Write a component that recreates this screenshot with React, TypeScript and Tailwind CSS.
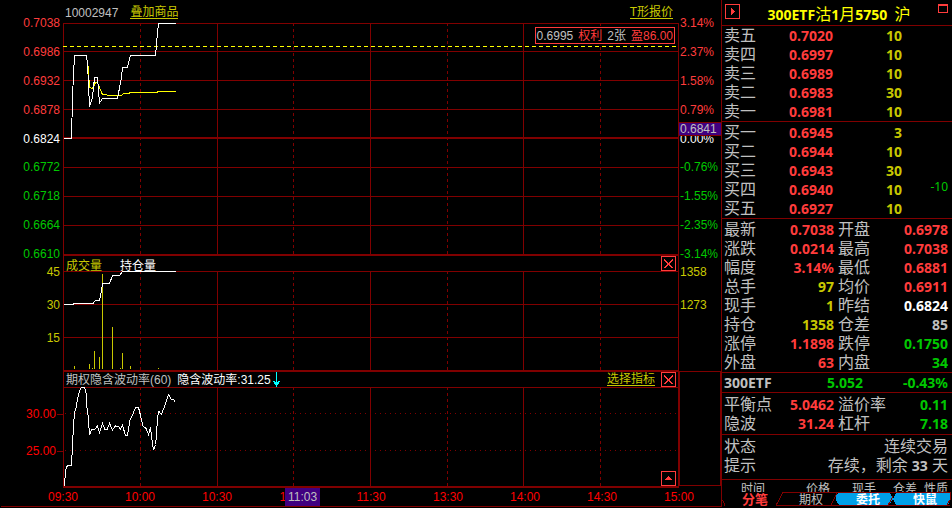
import React from "react";

const SANS = "font-['Liberation_Sans','Noto_Sans_CJK_SC',sans-serif]";
const QUOTE = "font-['Noto_Sans','Noto_Sans_CJK_SC',sans-serif]";

const RED = "text-[#ff3c3c]";
const GREEN = "text-[#00c800]";
const GOLD = "text-[#c8c800]";
const GREY = "text-[#c0c0c0]";
const LINE = "#800000";

const priceScale = [
  ["0.7038", RED, "3.14%"],
  ["0.6986", RED, "2.37%"],
  ["0.6932", RED, "1.58%"],
  ["0.6878", RED, "0.79%"],
  ["0.6824", "text-white", "0.00%"],
  ["0.6772", GREEN, "-0.76%"],
  ["0.6718", GREEN, "-1.55%"],
  ["0.6664", GREEN, "-2.35%"],
  ["0.6610", GREEN, "-3.14%"],
];

const times = ["09:30", "10:00", "10:30", "11:00", "11:30", "13:30", "14:00", "14:30", "15:00"];

const asks = [
  ["卖五", "0.7020", "10", ""],
  ["卖四", "0.6997", "10", ""],
  ["卖三", "0.6989", "10", ""],
  ["卖二", "0.6983", "30", ""],
  ["卖一", "0.6981", "10", ""],
];
const bids = [
  ["买一", "0.6945", "3", ""],
  ["买二", "0.6944", "10", ""],
  ["买三", "0.6943", "30", ""],
  ["买四", "0.6940", "10", "-10"],
  ["买五", "0.6927", "10", ""],
];

type Pair = [string, string, string, string, string, string];
const stats: Pair[] = [
  ["最新", "0.7038", RED, "开盘", "0.6978", RED],
  ["涨跌", "0.0214", RED, "最高", "0.7038", RED],
  ["幅度", "3.14%", RED, "最低", "0.6881", RED],
  ["总手", "97", GOLD, "均价", "0.6911", RED],
  ["现手", "1", GOLD, "昨结", "0.6824", "text-white"],
  ["持仓", "1358", GOLD, "仓差", "85", GREY],
  ["涨停", "1.1898", RED, "跌停", "0.1750", GREEN],
  ["外盘", "63", RED, "内盘", "34", GREEN],
];
const greeks: Pair[] = [
  ["平衡点", "5.0462", RED, "溢价率", "0.11", GREEN],
  ["隐波", "31.24", RED, "杠杆", "7.18", GREEN],
];

/* Half-hour grid lines: whole hours of the session are solid, the rest dashed. */
function TimeGrid({ top, bottom }: { top: number; bottom: number }) {
  return (
    <g stroke={LINE}>
      {[63.5, 217.5, 370.5, 523.5, 678.5].map((x) => (
        <line key={x} x1={x} x2={x} y1={top} y2={bottom} />
      ))}
      {[140.5, 293.5, 447.5, 600.5].map((x) => (
        <line key={x} x1={x} x2={x} y1={top} y2={bottom} strokeDasharray="3 3" />
      ))}
    </g>
  );
}

function Levels({ ys }: { ys: number[] }) {
  return (
    <g stroke={LINE}>
      {ys.map((y) => (
        <line key={y} x1="63" x2="679" y1={y} y2={y} />
      ))}
    </g>
  );
}

function PriceChart() {
  return (
    <svg className="block h-[233px] w-full" viewBox="63 23 616 233" preserveAspectRatio="none" shapeRendering="crispEdges" fill="none" role="img" aria-label="分时走势">
      <TimeGrid top={23} bottom={256} />
      <Levels ys={[23.5, 51.5, 80.5, 109.5, 167.5, 196.5, 225.5]} />
      <path d="M63 138H679M63 255H679" stroke={LINE} strokeWidth="2" />
      <path d="M63 46.5H679" stroke="#ffff00" strokeDasharray="4 3" />
      <path d="M87.5 60 88.5 72 89.5 87.5 92.5 88.5 95.5 82.5H97.5L100.5 90 102.5 94.5 111.5 95.5 115.5 95.5H121.5L123.5 93.5H128.5L130.5 92.5H157.5V91.5H176" stroke="#ffff00" />
      <path d="M64 138.5H71.5L72.5 97 73.5 75 74.5 55.5H86.5L87.5 64 88.5 84 89.5 107 92.5 97 93.5 88 94.5 77.5H97.5L98.5 91 99.5 103 102.5 98.5H117.5L119.5 88 121.5 77 122.5 67.5H127.5L130.5 55.5H155.5L157.5 33 158.5 23.5H176" stroke="#ffffff" />
    </svg>
  );
}

const volumeBars = [
  [74, 366], [89, 364], [92, 368], [94, 351], [99, 357], [102, 274],
  [112, 327], [120, 368], [122, 353], [130, 366], [158, 368],
];

function VolumeChart() {
  return (
    <svg className="block h-[101px] w-full" viewBox="63 271 616 101" preserveAspectRatio="none" shapeRendering="crispEdges" fill="none" role="img" aria-label="成交量">
      <TimeGrid top={271} bottom={372} />
      <Levels ys={[271.5, 304.5, 337.5]} />
      <path d="M63 371H679" stroke={LINE} strokeWidth="2" />
      {volumeBars.map(([x, y]) => (
        <rect key={x} x={x} y={y} width="1" height={369 - y} fill="#c8c800" />
      ))}
      <path d="M64 304.5H73L73.5 303.5H93L95.5 300.5H99.5L101.5 291 102.5 283.5H109.5L112.5 275.5H119.5L122.5 271.5H176" stroke="#ffffff" />
    </svg>
  );
}

function VolatilityChart() {
  return (
    <svg className="block h-[101px] w-full" viewBox="63 387 616 101" preserveAspectRatio="none" shapeRendering="crispEdges" fill="none" role="img" aria-label="期权隐含波动率">
      <TimeGrid top={387} bottom={488} />
      <Levels ys={[387.5]} />
      <path d="M65 413.5H679M65 450.5H679" stroke={LINE} strokeDasharray="1 4" />
      <path d="M63 487H679" stroke={LINE} strokeWidth="2" />
      <path
        d="M64.5 486 65.5 470 67.5 465.5H71.5L72.5 445 73.5 425 74.5 413 76 408 78 397 79.5 391 81.5 387.5H84.5L86 393 87 408 88 415 89 428 89.5 435 91.5 430 95 429 97.5 426 99.5 432.5 102.5 423.5 105 429.5H107L109.5 423.5 112.5 430 115.5 426 119 427 120.5 429 122.5 425.5 125.5 435.5H127.5L130 420 132.5 415 135.5 407.5H138.5L140 413.5 143 426 146 428.5 148.5 434.5 150.5 427.5 152 440 153.5 450 155.5 444.5 156.5 435 157.5 417 159 411.5 161.5 414.5 165 405 168.5 394.5 171.5 399.5H173.5L175.5 402.5"
        stroke="#ffffff"
      />
    </svg>
  );
}

function AxisLabel({ children, className }: { children: React.ReactNode; className: string }) {
  return <div className={"flex h-0 items-center whitespace-nowrap " + className}>{children}</div>;
}

function CloseButton() {
  return (
    <button type="button" aria-label="关闭" className="block size-[15px] shrink-0">
      <svg viewBox="0 0 15 15" className="block size-full" fill="none" stroke="#ff3c3c" shapeRendering="crispEdges">
        <rect x="0.5" y="0.5" width="14" height="14" fill="#000" />
        <path d="M3 3 12 12M12 3 3 12M3 4 11 12M12 4 4 12" />
      </svg>
    </button>
  );
}

function PairTable({ rows, label }: { rows: Pair[]; label: string }) {
  return (
    <table aria-label={label} className="w-full table-fixed border-collapse">
      <colgroup>
        <col className="w-12" />
        <col />
        <col className="w-13" />
        <col className="w-[62px]" />
      </colgroup>
      <tbody>
        {rows.map(([a, av, ac, b, bv, bc]) => (
          <tr key={a} className="h-[19px]">
            <th scope="row" className="p-0 text-left text-base leading-[19px] font-normal whitespace-nowrap">{a}</th>
            <td className={"p-0 text-right text-sm leading-[19px] font-bold " + ac}>{av}</td>
            <th scope="row" className="p-0 pl-1 text-left text-base leading-[19px] font-normal whitespace-nowrap">{b}</th>
            <td className={"p-0 text-right text-sm leading-[19px] font-bold " + bc}>{bv}</td>
          </tr>
        ))}
      </tbody>
    </table>
  );
}

function DepthTable({ rows, label }: { rows: string[][]; label: string }) {
  return (
    <table aria-label={label} className="w-full table-fixed border-collapse">
      <colgroup>
        <col className="w-10" />
        <col />
        <col className="w-[69px]" />
        <col className="w-[46px]" />
      </colgroup>
      <tbody>
        {rows.map(([name, price, qty, delta]) => (
          <tr key={name} className="h-[19px]">
            <th scope="row" className="p-0 text-left text-base leading-[19px] font-normal">{name}</th>
            <td className={"p-0 text-right text-sm leading-[19px] font-bold " + RED}>{price}</td>
            <td className={"p-0 text-right text-sm leading-[19px] font-bold " + GOLD}>{qty}</td>
            <td className={"p-0 text-right align-top text-xs leading-3.5 " + GREEN}>{delta}</td>
          </tr>
        ))}
      </tbody>
    </table>
  );
}

function ChartArea() {
  return (
    <main className={"grid min-w-0 flex-1 grid-cols-[63px_1fr_42px] content-start text-xs leading-none " + SANS}>
      {/* price */}
      <div className="flex h-64 flex-col justify-between pt-[23px] pb-0.5">
        {priceScale.map(([p, c]) => (
          <AxisLabel key={p} className={"justify-end pr-[3px] " + c}>{p}</AxisLabel>
        ))}
      </div>
      <section className="relative">
        <header className="flex h-[23px] items-center gap-3 pt-0.5 pr-1.5 pl-0.5">
          <span className={GREY}>10002947</span>
          <a href="#overlay" className={"border-b border-current leading-3 " + GOLD}>叠加商品</a>
          <a href="#t-quote" className={"ml-auto border-b border-current leading-3 " + GOLD}>T形报价</a>
        </header>
        <PriceChart />
        <div className={"absolute top-[27px] right-1 flex h-[17px] items-center gap-[5px] border border-[#ff3c3c] bg-black px-px whitespace-nowrap " + GREY}>
          <span>0.6995</span>
          <span className={RED}>权利</span>
          <span>2张</span>
          <span className={RED}>盈86.00</span>
        </div>
      </section>
      <div className="relative flex h-64 flex-col justify-between pt-[23px] pb-0.5">
        {priceScale.map(([, c, pct]) => (
          <AxisLabel key={pct} className={"pl-px " + c}>{pct}</AxisLabel>
        ))}
        <div className="absolute top-[122px] right-0 left-0 flex h-3.5 items-center border-y border-[#800000] bg-[#400080] pl-px text-[#c0c0c0]">0.6841</div>
      </div>

      {/* volume */}
      <div className={"flex flex-col gap-[33px] pt-4 " + GOLD}>
        {["45", "30", "15"].map((v) => (
          <AxisLabel key={v} className="justify-end pr-[3px]">{v}</AxisLabel>
        ))}
      </div>
      <section>
        <header className="flex h-[15px] items-start gap-[18px] border-x border-[#800000] pr-0.5 pl-0.5 leading-5">
          <span className={GOLD}>成交量</span>
          <span className="text-white">持仓量</span>
          <span className="ml-auto"><CloseButton /></span>
        </header>
        <VolumeChart />
      </section>
      <div className={"flex flex-col gap-[33px] pt-4 " + GOLD}>
        <AxisLabel className="pl-px">1358</AxisLabel>
        <AxisLabel className="pl-px">1273</AxisLabel>
      </div>

      {/* implied volatility */}
      <div className="flex flex-col gap-[37px] pt-[42px] text-[#ff0000]">
        {["30.00", "25.00"].map((v) => (
          <AxisLabel key={v} className="justify-end gap-px">
            {v}
            <span className="h-px w-1.5 bg-[#800000]" />
          </AxisLabel>
        ))}
      </div>
      <section className="relative">
        <header className="flex h-[15px] items-center gap-1.5 border-x border-[#800000] pr-0.5 pl-0.5 whitespace-nowrap">
          <span className={GREY}>期权隐含波动率(60)</span>
          <span className="flex items-center gap-0.5 text-white">
            隐含波动率:31.25
            <svg viewBox="0 0 7 15" className="h-[15px] w-[7px]" fill="none" stroke="#00ffff" shapeRendering="crispEdges" aria-hidden="true">
              <path d="M3.5 0V15M0.5 9.5 3.5 13.5 6.5 9.5M1.5 9.5 3.5 12.5 5.5 9.5" />
            </svg>
          </span>
          <a href="#indicators" className={"ml-auto border-b border-current leading-3 " + GOLD}>选择指标</a>
          <CloseButton />
        </header>
        <VolatilityChart />
        <button type="button" aria-label="展开" className="absolute right-[3px] bottom-0.5 size-[15px]">
          <svg viewBox="0 0 15 15" className="block size-full" fill="none" stroke="#ff3c3c" shapeRendering="crispEdges">
            <rect x="0.5" y="0.5" width="14" height="14" fill="#000" />
            <path d="M4 9H11L7.5 5Z" fill="#ff3c3c" stroke="none" />
          </svg>
        </button>
      </section>
      <div className="-mt-px mb-0.5 border border-[#800000]" />

      {/* time axis */}
      <div className="h-[18px]" />
      <div className="relative flex h-[18px] items-center justify-between text-[#ff0000]">
        {times.map((t) => (
          <span key={t} className="flex w-0 justify-center whitespace-nowrap">{t}</span>
        ))}
        <span className="absolute top-0 left-[222px] flex h-[18px] w-[35px] items-center justify-center bg-[#400080] text-[#c0c0c0]">11:03</span>
      </div>
      <div className="h-[18px]" />
      <div className="col-span-3 ml-px h-px bg-[#800000]" />
    </main>
  );
}

function Sidebar() {
  return (
    <aside className={"flex w-[231px] shrink-0 flex-col border-l border-[#800000] " + QUOTE + " " + GREY}>
      <header className="flex h-[26px] items-start justify-between border-b border-[#800000] pt-1 pr-1 pl-[3px]">
        <button type="button" aria-label="下一个" className="size-[15px]">
          <svg viewBox="0 0 15 15" className="block size-full" fill="none" stroke="#ff3c3c" shapeRendering="crispEdges">
            <rect x="0.5" y="0.5" width="14" height="14" />
            <path d="M6 4V11L10 7.5Z" fill="#ff3c3c" stroke="none" />
          </svg>
        </button>
        <h1 className="text-sm leading-5 font-bold whitespace-pre text-[#ffff00]">
          300ETF<span className="text-base leading-5 font-normal">沽</span>1<span className="text-base leading-5 font-normal">月</span>5750  <span className="text-base leading-5 font-normal">沪</span>
        </h1>
        <button type="button" aria-label="最大化" className="h-[9px] w-2.5 border border-t-2 border-[#ff3c3c]" />
      </header>

      <div className="border-b border-[#800000] pr-1 pl-0.5">
        <DepthTable rows={asks} label="卖盘" />
      </div>
      <div className="border-b border-[#800000] pt-px pr-1 pl-0.5">
        <DepthTable rows={bids} label="买盘" />
      </div>
      <div className="border-b border-[#800000] pt-px pr-1 pl-0.5">
        <PairTable rows={stats} label="行情" />
      </div>
      <div className="flex h-5 items-center border-b border-[#800000] pr-1 pl-0.5 text-sm leading-none font-bold">
        <span className="flex-1">300ETF</span>
        <span className={"flex-1 text-right " + GREEN}>5.052</span>
        <span className={"w-[85px] text-right " + GREEN}>-0.43%</span>
      </div>
      <div className="border-b border-[#800000] pt-0.5 pr-1 pb-px pl-0.5">
        <PairTable rows={greeks} label="指标" />
      </div>
      <dl className="grid h-[45px] grid-cols-[auto_1fr] content-start border-b border-[#800000] pt-0.5 pr-1 pl-0.5 text-base leading-[19px] font-normal">
        <dt>状态</dt>
        <dd className="text-right">连续交易</dd>
        <dt>提示</dt>
        <dd className="text-right">存续，剩余 <span className="text-sm leading-none font-bold">33</span> 天</dd>
      </dl>

      <div className="h-3 overflow-hidden pr-1 pl-[19px]">
        <table aria-label="成交明细" className="w-full border-collapse text-xs leading-[18px]">
          <thead>
            <tr>
              <th className="w-[65px] p-0 text-left font-normal">时间</th>
              <th className="w-[46px] p-0 text-left font-normal">价格</th>
              <th className="w-[41px] p-0 text-left font-normal">现手</th>
              <th className="p-0 text-left font-normal">仓差</th>
              <th className="w-6 p-0 text-left font-normal whitespace-nowrap">性质</th>
            </tr>
          </thead>
        </table>
      </div>
      <nav className="relative flex h-[15px] text-xs leading-[15px]">
        <svg viewBox="722 493 230 15" preserveAspectRatio="none" className="absolute inset-0 h-full w-full" fill="none" shapeRendering="crispEdges" aria-hidden="true">
          <path d="M838 494H890L893 500L889 506H839L836 501V497ZM896 494H951V499L948 506H896L893 500Z" fill="#00a0e9" />
          <path d="M722.5 501 725 506.5M776 506.5 783 493.5H951M780 506.5H831L837 494M776 506.5H950M888 506.5 893 497M950.5 494V500L947 506" stroke={LINE} />
        </svg>
        <button type="button" className="relative w-[66px] text-[13px] font-bold text-[#ff3c3c]">分笔</button>
        <button type="button" className="relative w-[46px]">期权</button>
        <button type="button" className="relative w-[68px] font-bold text-white">委托</button>
        <button type="button" className="relative w-[46px] font-bold text-white">快鼠</button>
      </nav>
    </aside>
  );
}

export default function App() {
  return (
    <div className="flex min-h-screen items-start overflow-hidden bg-black">
      <ChartArea />
      <Sidebar />
    </div>
  );
}
